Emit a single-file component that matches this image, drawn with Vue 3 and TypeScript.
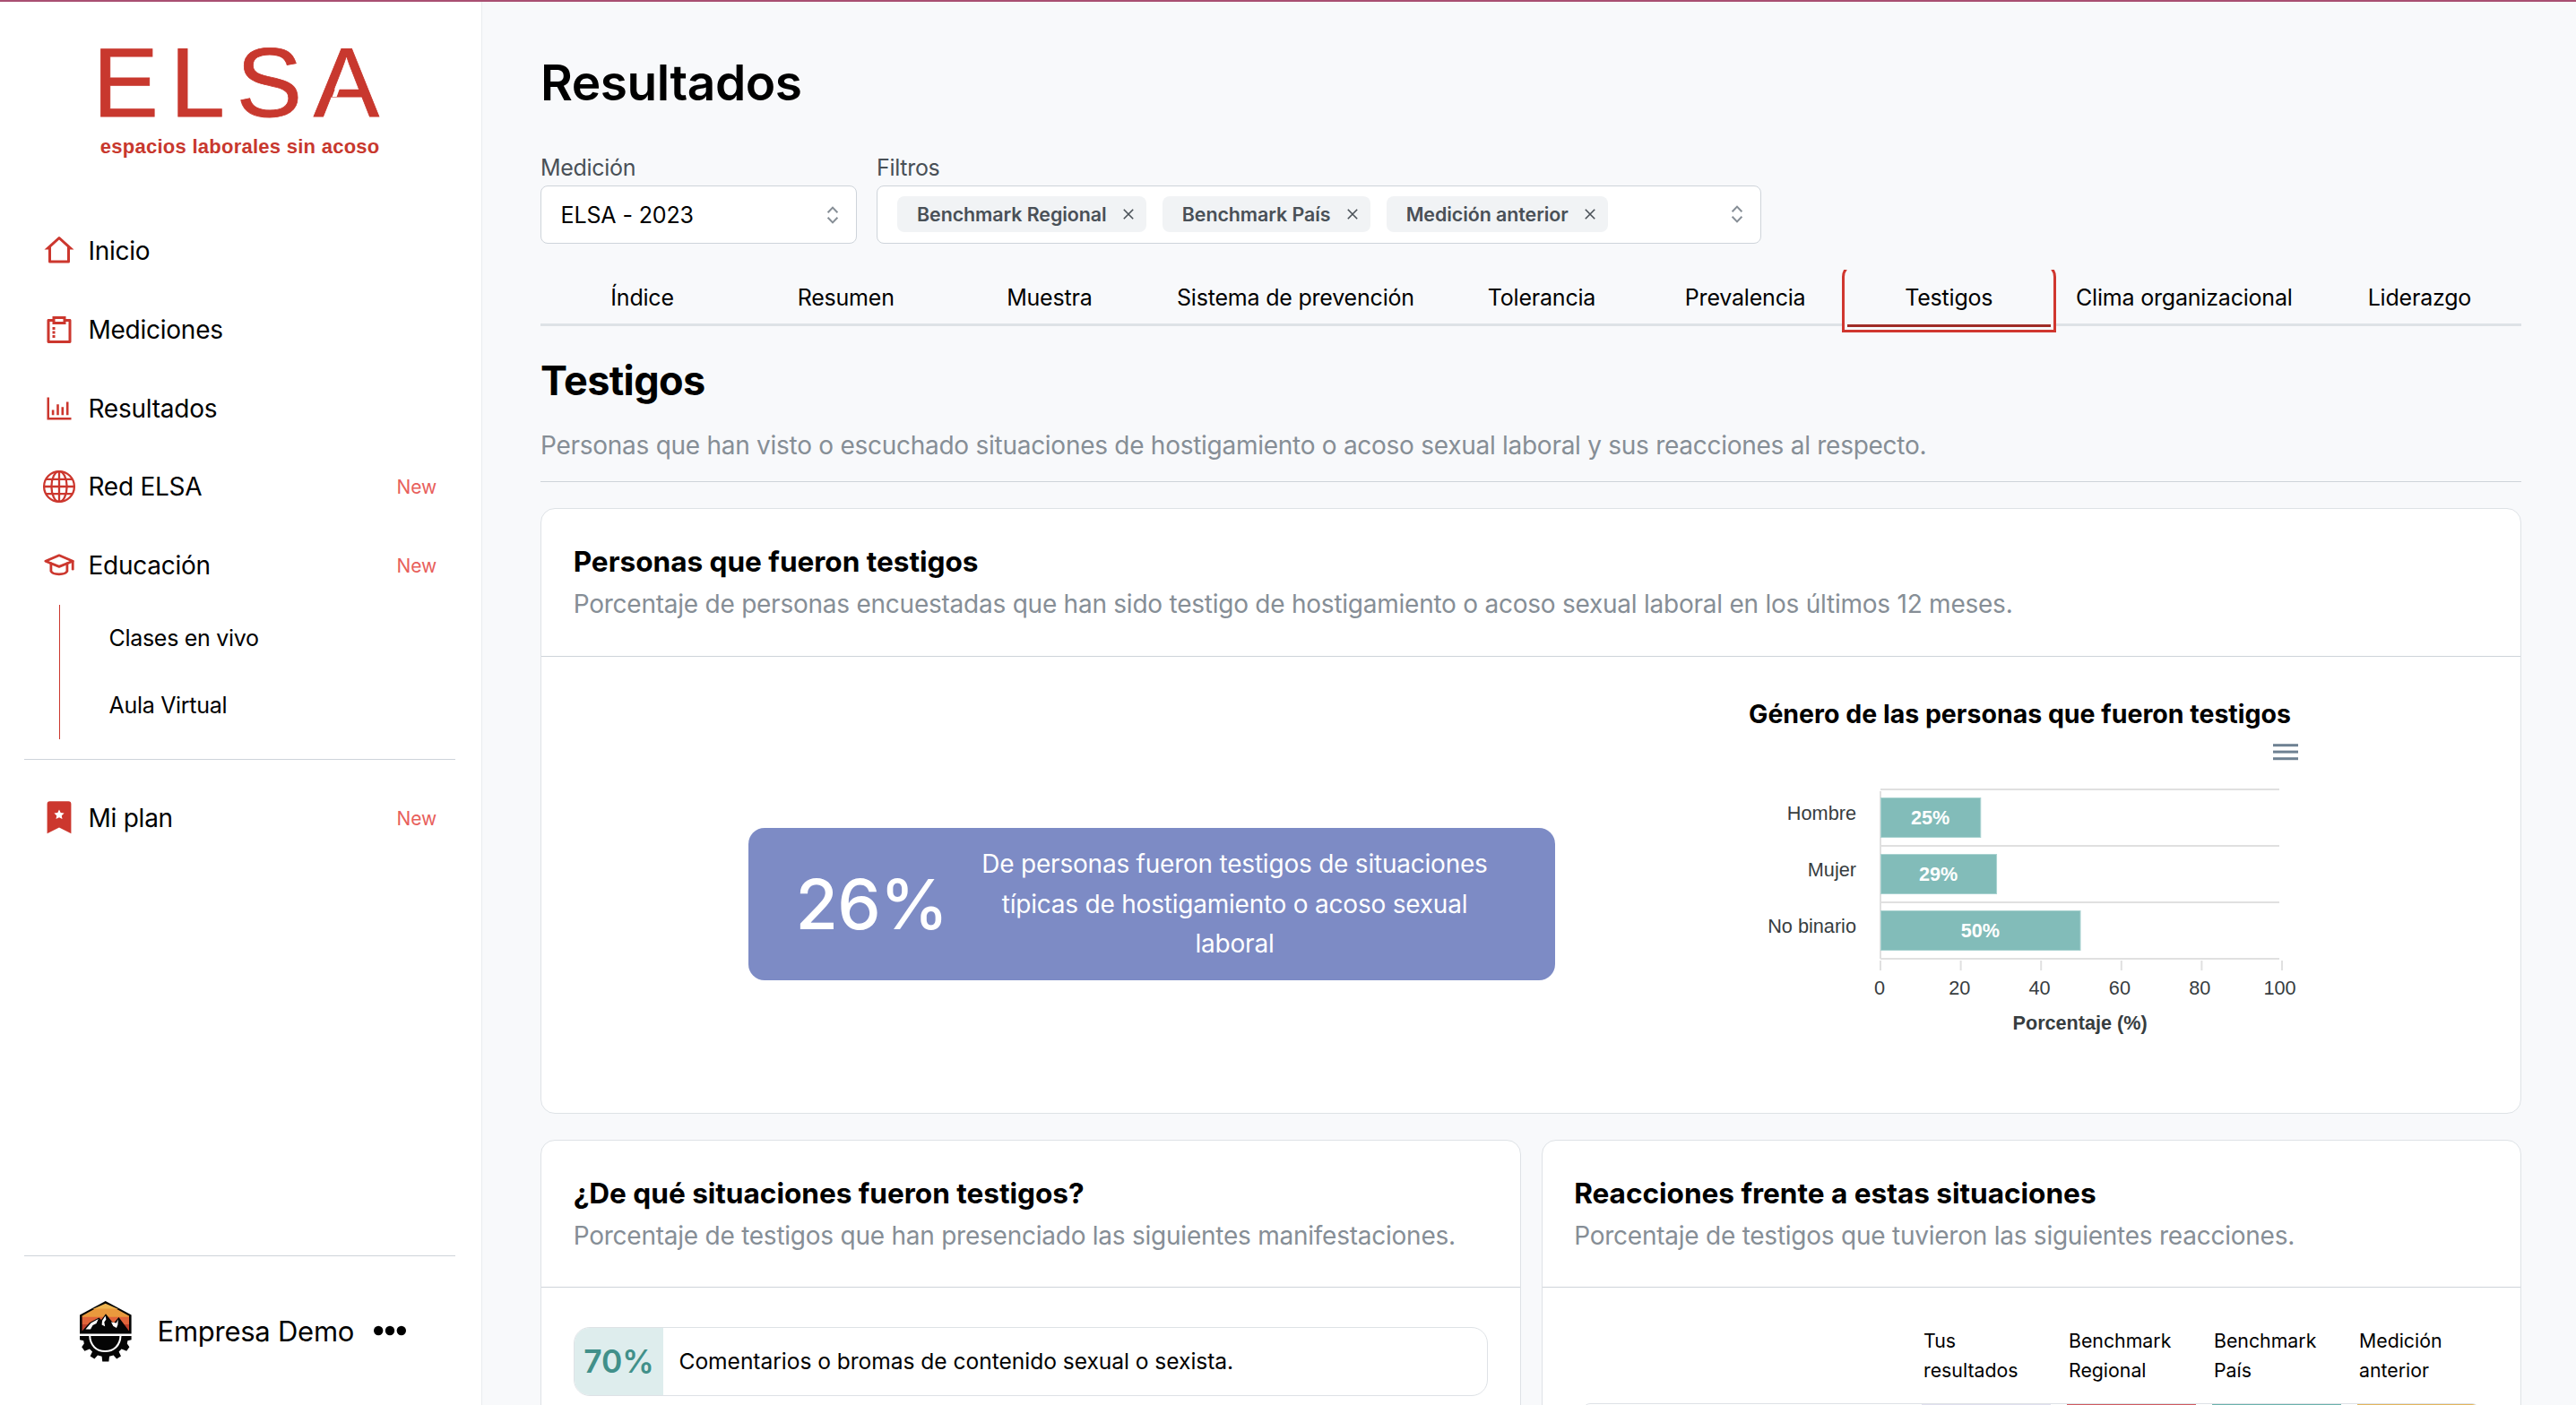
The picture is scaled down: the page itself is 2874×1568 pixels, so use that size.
<script setup lang="ts">
interface NavItem {
  label: string
  icon: 'home' | 'survey' | 'chart' | 'globe' | 'cap'
  isNew?: boolean
}

const navItems: NavItem[] = [
  { label: 'Inicio', icon: 'home' },
  { label: 'Mediciones', icon: 'survey' },
  { label: 'Resultados', icon: 'chart' },
  { label: 'Red ELSA', icon: 'globe', isNew: true },
  { label: 'Educación', icon: 'cap', isNew: true },
]
const subItems: string[] = ['Clases en vivo', 'Aula Virtual']
const filters: string[] = ['Benchmark Regional', 'Benchmark País', 'Medición anterior']

interface Tab { label: string; kind?: 'wide' | 'medium' }
const tabs: Tab[] = [
  { label: 'Índice' },
  { label: 'Resumen' },
  { label: 'Muestra' },
  { label: 'Sistema de prevención', kind: 'wide' },
  { label: 'Tolerancia' },
  { label: 'Prevalencia' },
  { label: 'Testigos' },
  { label: 'Clima organizacional', kind: 'medium' },
  { label: 'Liderazgo' },
]
const activeTab = 'Testigos'

const genders = [
  { label: 'Hombre', value: 25 },
  { label: 'Mujer', value: 29 },
  { label: 'No binario', value: 50 },
]
const ticks: number[] = [0, 20, 40, 60, 80, 100]
const plot = { left: 158, right: 603, top: 66, row: 63 }
const scaleX = (v: number): number => (v / 100) * (plot.right - plot.left)

const columns = [
  { first: 'Tus', second: 'resultados', color: '#e0dfee' },
  { first: 'Benchmark', second: 'Regional', color: '#cf5a60' },
  { first: 'Benchmark', second: 'País', color: '#6bb3ad' },
  { first: 'Medición', second: 'anterior', color: '#e3b65c' },
]
</script>

<template>
  <div class="app">
    <aside class="sidebar">
      <div class="brand">
        <div class="brand-name">ELSA<span class="brand-cut"></span></div>
        <div class="brand-tag">espacios laborales sin acoso</div>
      </div>

      <nav class="nav">
        <a v-for="item in navItems" :key="item.label" class="nav-item">
          <svg v-if="item.icon === 'home'" class="icon" viewBox="0 0 24 24">
            <path fill="currentColor" d="M19 21H5a1 1 0 0 1-1-1v-9H1l10.327-9.388a1 1 0 0 1 1.346 0L23 11h-3v9a1 1 0 0 1-1 1zM6 19h12V9.157l-6-5.454-6 5.454V19z" />
          </svg>
          <svg v-else-if="item.icon === 'survey'" class="icon" viewBox="0 0 24 24">
            <path fill="currentColor" d="M17 2v2h3.007c.548 0 .993.445.993.993v16.014a.994.994 0 0 1-.993.993H3.993A.994.994 0 0 1 3 21.007V4.993C3 4.445 3.445 4 3.993 4H7V2h10zM7 6H5v14h14V6h-2v2H7V6zm2 10v2H7v-2h2zm0-3v2H7v-2h2zm0-3v2H7v-2h2zm6-6H9v2h6V4z" />
          </svg>
          <svg v-else-if="item.icon === 'chart'" class="icon" viewBox="0 0 36 36">
            <path fill="currentColor" d="M4.5 5.5H7V28H31.5V30.6H4.5zM9.8 19.5h2.6v5.8H9.8zM15.2 13.2h2.6v12.1h-2.6zM20.5 16.3h2.6v9h-2.6zM25.9 10.5h2.6v14.8h-2.6z" />
          </svg>
          <svg v-else-if="item.icon === 'globe'" class="icon" viewBox="0 0 36 36">
            <g fill="none" stroke="currentColor" stroke-width="2.3">
              <circle cx="18" cy="18" r="16.9" />
              <ellipse cx="18" cy="18" rx="8.6" ry="16.9" />
              <path d="M18 1V35M1 18H35M3.4 9.9H32.6M3.4 26.1H32.6" />
            </g>
          </svg>
          <svg v-else class="icon" viewBox="0 0 36 36">
            <g fill="none" stroke="currentColor" stroke-width="2.8" stroke-linejoin="round" stroke-linecap="round">
              <path d="M2.8 13.2L18 6.8L33.2 13.2L18 19.4Z" />
              <path d="M33.2 13.4V22.2" />
              <path d="M8.9 15.8V24.5C11 28.9 24.8 28.9 26.9 24.5V15.8" />
            </g>
          </svg>
          <span class="nav-label">{{ item.label }}</span>
          <span v-if="item.isNew" class="badge">New</span>
        </a>
        <div class="subnav">
          <a v-for="sub in subItems" :key="sub" class="sub-item">{{ sub }}</a>
        </div>
        <div class="divider nav-divider"></div>
        <a class="nav-item">
          <svg class="icon" viewBox="0 0 36 36">
            <path fill="currentColor" d="M7.5 -.7H28.5A3 3 0 0 1 31.4 2.3V35.3L18 28.4L4.6 35.3V2.3A3 3 0 0 1 7.5 -.7Z" />
            <path fill="#fff" d="M18 8.4L19.7 12L23.6 12.5L20.8 15.2L21.5 19.1L18 17.2L14.5 19.1L15.2 15.2L12.4 12.5L16.3 12Z" />
          </svg>
          <span class="nav-label">Mi plan</span>
          <span class="badge">New</span>
        </a>
      </nav>

      <div class="account">
        <div class="divider"></div>
        <div class="account-row">
          <svg class="emblem" viewBox="0 0 58 68">
            <path d="M28.7 0L57.6 15.6V36.6H0V15.6Z" fill="#050505" />
            <path d="M28.7 2.8L43 9H14.4Z" fill="#efb550" />
            <path d="M17 8.6H40.4L55 16.6V18H2.6V16.6Z" fill="#ea993d" />
            <path d="M2.6 17.7H55V26H2.6Z" fill="#e1643a" />
            <path d="M2.6 26H55V33.2H2.6Z" fill="#bf402c" />
            <path d="M2.6 33.4L11 24L21.5 18.4L24 21L29 14.2L35.5 22.5L38 24.5L43.5 18L55 33.4V36H2.6Z" fill="#050505" />
            <path d="M6.5 31.6L12.5 24.6L20.8 20L18.5 25L14.5 27L12 31.6Z" fill="#fff" />
            <path d="M28.6 16.4L25 22L24.6 26.6L28.2 28.3L27.3 23.5L29.4 20.5Z" fill="#fff" />
            <path d="M42.8 20.4L40.8 24.5L35 23.4L37.4 28L41 30L42.4 26.4Z" fill="#fff" />
            <path d="M0 39H57.6V43.2L53.4 44.2L52.8 47.6L55.4 51.2L52.2 55.8L46.6 53.6L43.6 56.4L46 61.6L41.2 64.6L37.6 60.6L33 61.8L32.4 67.6H25.2L24.6 61.8L20 60.6L16.4 64.6L11.6 61.6L14 56.4L11 53.6L5.4 55.8L2.2 51.2L4.8 47.6L4.2 44.2L0 43.2Z" fill="#050505" />
            <path d="M11.2 38.6C11.4 49.6 18.8 56 28.2 56C37.8 56 45.2 49.6 45.5 38.6" fill="none" stroke="#fff" stroke-width="2" />
          </svg>
          <span class="account-name">Empresa Demo</span>
          <svg class="dots" viewBox="0 0 36 12">
            <circle cx="5.2" cy="6" r="5.2" /><circle cx="18" cy="6" r="5.2" /><circle cx="30.8" cy="6" r="5.2" />
          </svg>
        </div>
      </div>
    </aside>

    <main class="main">
      <h1 class="page-title">Resultados</h1>

      <div class="fields">
        <div class="field">
          <label class="field-label">Medición</label>
          <div class="control measure">
            <span class="measure-value">ELSA - 2023</span>
            <svg class="chevrons" viewBox="0 0 14 20"><path d="M1.6 7.2L7 1.6L12.4 7.2M1.6 12.8L7 18.4L12.4 12.8" /></svg>
          </div>
        </div>
        <div class="field">
          <label class="field-label">Filtros</label>
          <div class="control multi">
            <span v-for="f in filters" :key="f" class="tag">
              {{ f }}
              <svg class="close" viewBox="0 0 12 12"><path d="M.8 .8L11.2 11.2M11.2 .8L.8 11.2" /></svg>
            </span>
            <svg class="chevrons" viewBox="0 0 14 20"><path d="M1.6 7.2L7 1.6L12.4 7.2M1.6 12.8L7 18.4L12.4 12.8" /></svg>
          </div>
        </div>
      </div>

      <div class="tabs">
        <button v-for="t in tabs" :key="t.label" :class="['tab', t.kind, { active: t.label === activeTab }]">{{ t.label }}</button>
      </div>

      <h2 class="section-title">Testigos</h2>
      <p class="section-desc">Personas que han visto o escuchado situaciones de hostigamiento o acoso sexual laboral y sus reacciones al respecto.</p>

      <section class="card overview">
        <header class="card-head">
          <h3>Personas que fueron testigos</h3>
          <p>Porcentaje de personas encuestadas que han sido testigo de hostigamiento o acoso sexual laboral en los últimos 12 meses.</p>
        </header>
        <div class="overview-body">
          <div class="highlight">
            <span class="highlight-value">26%</span>
            <span class="highlight-text">De personas fueron testigos de situaciones<br />típicas de hostigamiento o acoso sexual<br />laboral</span>
          </div>
          <div class="chart">
            <h4>Género de las personas que fueron testigos</h4>
            <svg class="chart-svg" width="660" height="350" viewBox="0 0 660 350">
              <g fill="#6e8192">
                <rect x="596" y="15.2" width="28" height="3" />
                <rect x="596" y="22.6" width="28" height="3" />
                <rect x="596" y="30.2" width="28" height="3" />
              </g>
              <g stroke="#e0e0e0" stroke-width="2">
                <line v-for="n in 4" :key="n" :x1="plot.left" :x2="plot.right" :y1="plot.top + (n - 1) * plot.row" :y2="plot.top + (n - 1) * plot.row" />
                <line :x1="plot.left" :x2="plot.left" y1="68" y2="255" />
                <line v-for="(t, i) in ticks" :key="t" :x1="158 + i * 89.6" :x2="158 + i * 89.6" y1="257" y2="268" />
              </g>
              <g v-for="(g, i) in genders" :key="g.label">
                <rect :x="plot.left + 0.5" :y="75.5 + i * plot.row" :width="scaleX(g.value)" height="44" fill="#82bcb9" stroke="#a8d2d0" stroke-width="1" />
                <text class="axis" x="131" :y="99.6 + i * plot.row" text-anchor="end">{{ g.label }}</text>
                <text class="value" :x="plot.left + scaleX(g.value) / 2" :y="105 + i * plot.row" text-anchor="middle">{{ g.value }}%</text>
              </g>
              <text v-for="(t, i) in ticks" :key="t" class="axis" :x="157 + i * 89.3" y="294.8" text-anchor="middle">{{ t }}</text>
              <text class="axis-title" x="380.6" y="333.7" text-anchor="middle">Porcentaje (%)</text>
            </svg>
          </div>
        </div>
      </section>

      <div class="pair">
        <section class="card">
          <header class="card-head">
            <h3>¿De qué situaciones fueron testigos?</h3>
            <p>Porcentaje de testigos que han presenciado las siguientes manifestaciones.</p>
          </header>
          <div class="situation">
            <span class="situation-value">70%</span>
            <span class="situation-text">Comentarios o bromas de contenido sexual o sexista.</span>
          </div>
        </section>
        <section class="card">
          <header class="card-head">
            <h3>Reacciones frente a estas situaciones</h3>
            <p>Porcentaje de testigos que tuvieron las siguientes reacciones.</p>
          </header>
          <div class="reactions">
            <div class="reactions-head">
              <span v-for="c in columns" :key="c.first + c.second">{{ c.first }}<br />{{ c.second }}</span>
            </div>
            <div class="reactions-row">
              <span v-for="c in columns" :key="c.first + c.second" :style="{ background: c.color }"></span>
            </div>
          </div>
        </section>
      </div>
    </main>
  </div>
</template>

<style>
body {
  margin: 0;
  overflow: hidden;
}
</style>

<style scoped>
* {
  box-sizing: border-box;
}
.app {
  display: flex;
  height: 1568px;
  overflow: hidden;
  border-top: 2px solid #a94f72;
  background: #f8f9fb;
  color: #000;
  font-family: Inter, "Liberation Sans", sans-serif;
}
h1, h2, h3, h4, p {
  margin: 0;
}

/* Sidebar */
.sidebar {
  display: flex;
  flex-direction: column;
  flex: none;
  width: 538px;
  background: #fff;
  border-right: 1px solid #e9ecef;
}
.brand {
  padding: 35px 0 0 103.5px;
  color: #c8382e;
  font-family: "Liberation Sans", Arial, sans-serif;
}
.brand-name {
  position: relative;
  font-size: 110px;
  line-height: 110px;
  letter-spacing: 12.8px;
  -webkit-text-stroke: 0.8px #c8382e;
}
.brand-cut {
  position: absolute;
  left: 269px;
  top: 58px;
  width: 4.5px;
  height: 13px;
  background: #fff;
  transform: skewX(-20deg);
}
.brand-tag {
  margin: 4px 0 0 8.3px;
  font-size: 22px;
  font-weight: 700;
  line-height: 26px;
  letter-spacing: 0.26px;
  white-space: nowrap;
}
.nav {
  padding-top: 59.5px;
}
.nav-item {
  display: flex;
  align-items: center;
  height: 87.7px;
  padding: 0 50px 0 48px;
}
.icon {
  flex: none;
  width: 36px;
  height: 36px;
  overflow: visible;
  color: #cc372e;
}
.nav-label {
  flex: 1;
  margin-left: 14.5px;
  font-size: 28px;
  letter-spacing: -0.25px;
}
.badge {
  color: #e8605c;
  font-size: 21px;
  letter-spacing: -0.1px;
}
.subnav {
  margin-left: 66px;
  height: 150px;
  border-left: 1px solid #cc372e;
}
.sub-item {
  display: block;
  height: 75px;
  padding-left: 54.5px;
  font-size: 25px;
  line-height: 75px;
  letter-spacing: -0.3px;
}
.divider {
  height: 1px;
  margin: 0 29px 0 27px;
  background: #ced4da;
}
.nav-divider {
  margin-top: 22px;
  margin-bottom: 21.5px;
}
.account {
  margin-top: auto;
  height: 167px;
}
.account-row {
  display: flex;
  align-items: center;
  height: 168px;
  padding-left: 88.5px;
}
.emblem {
  width: 58px;
  height: 68px;
}
.account-name {
  margin-left: 29px;
  padding-bottom: 2px;
  font-size: 31px;
  letter-spacing: -0.25px;
}
.dots {
  width: 36px;
  height: 12px;
  margin: 0 0 2px 22px;
}

/* Main column */
.main {
  flex: 1;
  min-width: 0;
  padding: 60px 61px 0 65px;
}
.page-title {
  font-size: 55px;
  font-weight: 600;
  line-height: 60px;
  letter-spacing: -0.45px;
}
.fields {
  display: flex;
  gap: 22px;
  margin-top: 50px;
}
.field-label {
  display: block;
  height: 35px;
  color: #495057;
  font-size: 25px;
  line-height: 30px;
  letter-spacing: -0.3px;
}
.control {
  display: flex;
  align-items: center;
  height: 65px;
  border: 1px solid #ced4da;
  border-radius: 8px;
  background: #fff;
}
.measure {
  width: 353px;
  padding: 0 19px 0 21.5px;
}
.measure-value {
  font-size: 25px;
  letter-spacing: -0.12px;
}
.multi {
  width: 987px;
  gap: 18px;
  padding: 0 19px 1px 22px;
}
.chevrons {
  flex: none;
  width: 14px;
  height: 20px;
  margin-left: auto;
  fill: none;
  stroke: #868e96;
  stroke-width: 2;
}
.tag {
  display: flex;
  align-items: center;
  height: 40px;
  padding: 0 14px 1px 22px;
  border-radius: 8px;
  background: #f1f3f5;
  color: #495057;
  font-size: 21.4px;
  font-weight: 600;
  letter-spacing: -0.06px;
  white-space: nowrap;
}
.close {
  width: 12px;
  height: 12px;
  margin-left: 18.2px;
  fill: none;
  stroke: #495057;
  stroke-width: 1.6;
}
.tabs {
  display: flex;
  height: 63px;
  margin-top: 29px;
  background: linear-gradient(#dee2e6, #dee2e6) 0 100% / 100% 3px no-repeat;
  clip-path: inset(0 -10px -10px -10px);
}
.tab {
  position: relative;
  flex: 0 0 227.15px;
  height: 63px;
  padding: 0;
  border: 0;
  background: none;
  font: 400 25px/61px Inter, sans-serif;
  letter-spacing: -0.2px;
  color: #000;
}
.tab.wide {
  flex-basis: 322px;
}
.tab.medium {
  flex-basis: 298px;
}
.tab.active {
  z-index: 1;
}
.tab.active::before {
  content: "";
  position: absolute;
  z-index: -1;
  inset: -8px -6px -7px;
  border: 3px solid #d0372f;
  border-radius: 16px 16px 0 0;
  background: #f8f9fb;
}
.tab.active::after {
  content: "";
  position: absolute;
  left: 0;
  right: 0;
  bottom: -1px;
  height: 3px;
  background: #a02c26;
}
.section-title {
  margin-top: 36px;
  font-size: 45px;
  font-weight: 700;
  line-height: 50px;
  letter-spacing: -0.6px;
}
.section-desc {
  height: 58px;
  margin-top: 30px;
  border-bottom: 1px solid #ced4da;
  color: #868e96;
  font-size: 28px;
  line-height: 34px;
  letter-spacing: -0.27px;
}
.card {
  border: 1px solid #dee2e6;
  border-radius: 16px;
  background: #fff;
}
.card-head {
  height: 165px;
  padding: 39px 35px 0 35.7px;
  border-bottom: 1px solid #ced4da;
}
.card-head h3 {
  font-size: 31.6px;
  font-weight: 700;
  line-height: 40px;
  letter-spacing: -0.03px;
}
.card-head p {
  margin-top: 9.5px;
  color: #868e96;
  font-size: 28px;
  line-height: 34px;
  letter-spacing: -0.24px;
  white-space: nowrap;
}
.overview {
  height: 676px;
  margin-top: 29px;
}
.overview-body {
  display: flex;
  align-items: flex-start;
  padding-left: 231px;
}
.highlight {
  display: flex;
  align-items: center;
  width: 900px;
  height: 170px;
  margin-top: 191px;
  padding-left: 52.5px;
  border-radius: 18px;
  background: #7d8bc5;
  color: #fff;
}
.highlight-value {
  width: 190px;
  font-size: 77px;
  font-weight: 550;
  line-height: 90px;
  letter-spacing: -0.8px;
}
.highlight-text {
  width: 600px;
  font-size: 28px;
  line-height: 44.6px;
  letter-spacing: -0.22px;
  text-align: center;
}
.chart {
  margin: 46px 0 0 205px;
}
.chart h4 {
  padding-left: 11px;
  font-size: 28.5px;
  font-weight: 700;
  line-height: 36px;
  white-space: nowrap;
}
.chart-svg {
  display: block;
  font-family: "Liberation Sans", Helvetica, sans-serif;
  font-size: 22px;
}
.axis {
  fill: #373d3f;
  font-size: 21.7px;
}
.value {
  fill: #fff;
  font-size: 21.6px;
  font-weight: 700;
}
.axis-title {
  fill: #373d3f;
  font-size: 21.6px;
  font-weight: 700;
}
.pair {
  display: grid;
  grid-template-columns: 1fr 1fr;
  gap: 23px;
  margin-top: 29px;
}
.pair .card {
  height: 500px;
}
.pair .card-head {
  height: 164px;
}
.situation {
  display: flex;
  height: 77px;
  margin: 44px 36px 0;
  overflow: hidden;
  border: 1px solid #dee2e6;
  border-radius: 18px;
}
.situation-value {
  flex: none;
  width: 99px;
  background: #deeded;
  color: #41908a;
  font-size: 35.4px;
  font-weight: 600;
  line-height: 75px;
  letter-spacing: -0.1px;
  text-align: center;
}
.situation-text {
  padding-left: 17.5px;
  font-size: 24.6px;
  line-height: 75px;
  letter-spacing: -0.05px;
}
.reactions {
  margin: 43px 46px 0 45.5px;
}
.reactions-head,
.reactions-row {
  display: grid;
  grid-template-columns: repeat(3, 144px) 135px;
  column-gap: 18px;
  justify-content: end;
}
.reactions-head {
  height: 86px;
  font-size: 21.3px;
  line-height: 33.3px;
}
.reactions-head span {
  padding-left: 1px;
}
.reactions-row {
  height: 80px;
  overflow: hidden;
  border: 1px solid #dee2e6;
  border-radius: 8px;
}
</style>
